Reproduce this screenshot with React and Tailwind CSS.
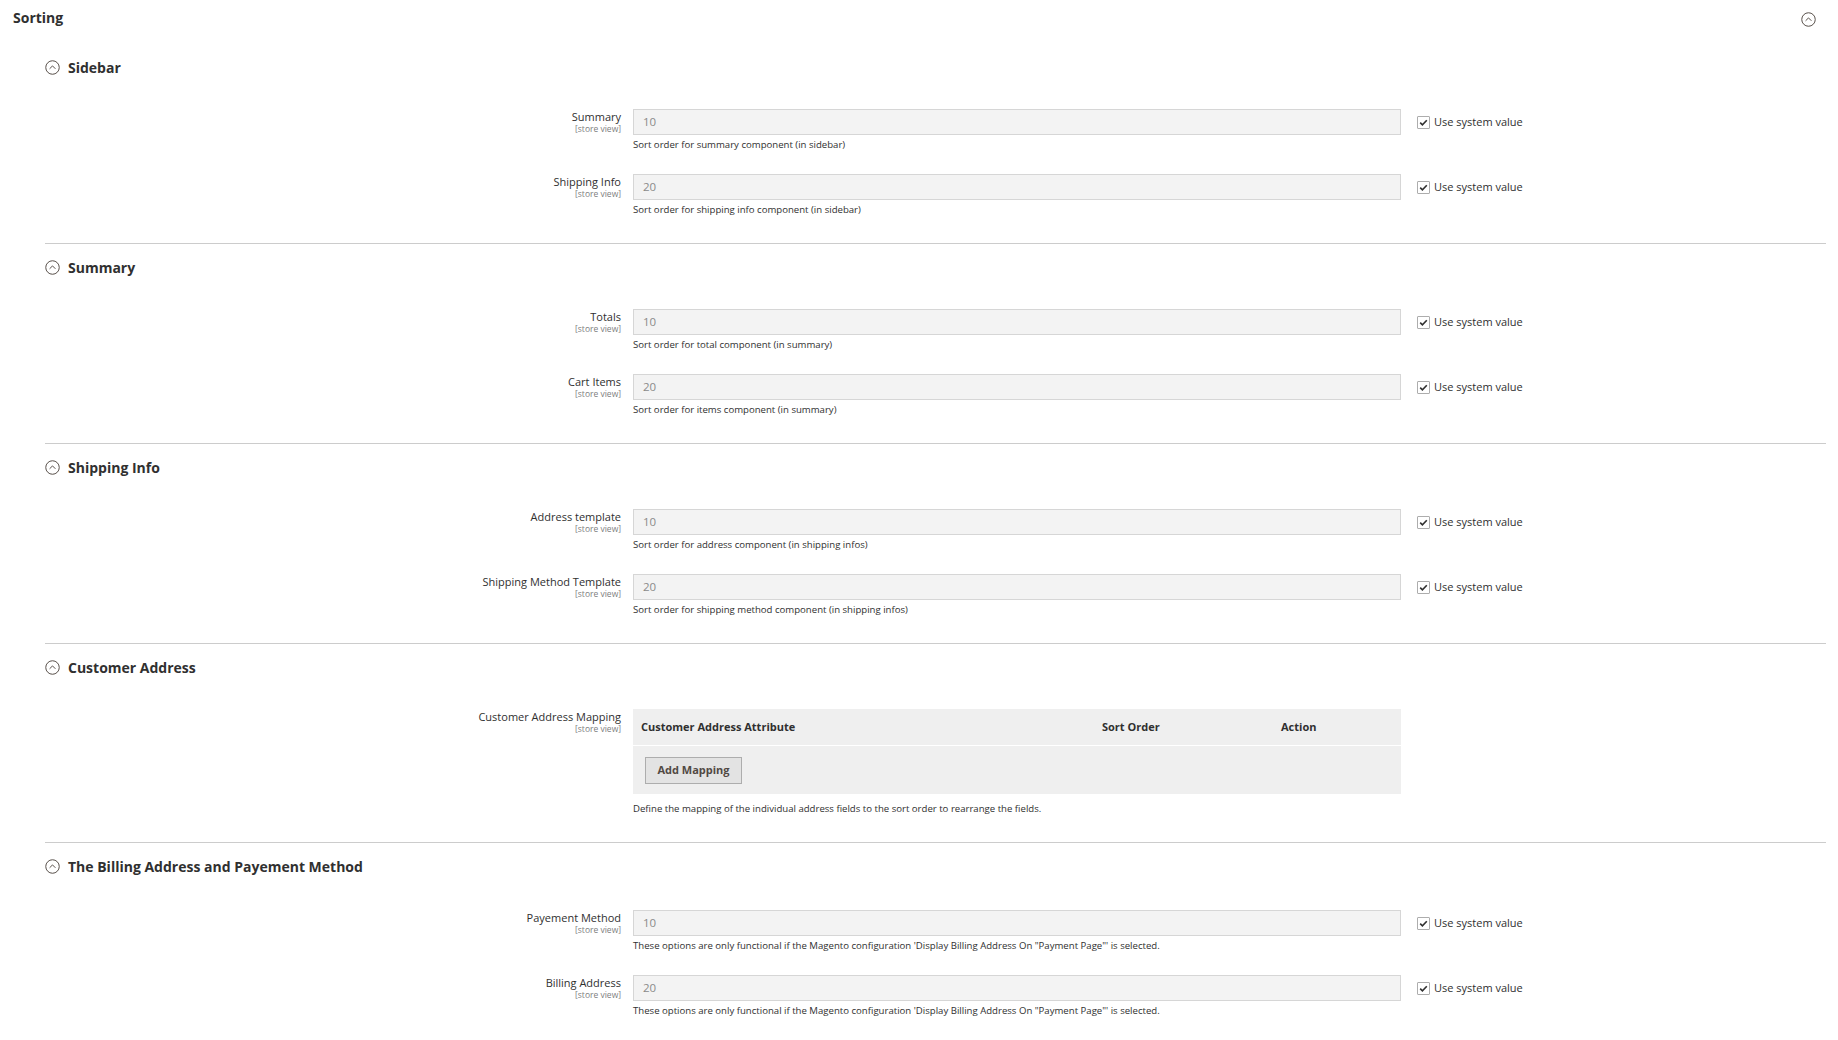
import React from "react";

/* ================= DATA ================= */

const SECTIONS = [
  {
    title: "Sidebar",
    rows: [
      { label: "Summary", value: "10", note: "Sort order for summary component (in sidebar)" },
      { label: "Shipping Info", value: "20", note: "Sort order for shipping info component (in sidebar)" },
    ],
  },
  {
    title: "Summary",
    rows: [
      { label: "Totals", value: "10", note: "Sort order for total component (in summary)" },
      { label: "Cart Items", value: "20", note: "Sort order for items component (in summary)" },
    ],
  },
  {
    title: "Shipping Info",
    rows: [
      { label: "Address template", value: "10", note: "Sort order for address component (in shipping infos)" },
      { label: "Shipping Method Template", value: "20", note: "Sort order for shipping method component (in shipping infos)" },
    ],
  },
];

const BILLING_NOTE =
  'These options are only functional if the Magento configuration \'Display Billing Address On "Payment Page"\' is selected.';

/* ================= ICONS ================= */

function CollapseIcon({ size = 15 }) {
  return (
    <svg width={size} height={size} viewBox="0 0 14 14" fill="none">
      <circle cx="7" cy="7" r="6.3" stroke="#514943" strokeWidth="0.9" />
      <polyline points="4.3,8.2 7,5.5 9.7,8.2" stroke="#514943" strokeWidth="0.9" fill="none" />
    </svg>
  );
}

function Checkbox() {
  return (
    <span className="w-[13px] h-[13px] border border-[#adadad] bg-white flex items-center justify-center rounded-[1px]">
      <svg width="9" height="9" viewBox="0 0 9 9" fill="none">
        <polyline points="1.2,4.6 3.4,6.8 7.8,2.2" stroke="#303030" strokeWidth="1.6" fill="none" />
      </svg>
    </span>
  );
}

/* ================= PIECES ================= */

function Label({ text }) {
  return (
    <div className="w-[588px] pr-[12px] text-right pt-[1px]">
      <div className="text-[11px] leading-[14px] text-[#303030]">{text}</div>
      <div className="text-[8.5px] leading-[10px] text-[#808080]">[store view]</div>
    </div>
  );
}

function FieldRow({ label, value, note }) {
  return (
    <div className="flex">
      <Label text={label} />
      <div className="w-[768px]">
        <div className="h-[26px] border border-[#d6d6d6] bg-[#f3f3f3] flex items-center px-[9px] text-[11.5px] text-[#8a8a8a]">
          {value}
        </div>
        <div className="mt-[3px] text-[9.6px] leading-[14px] text-[#303030]">{note}</div>
      </div>
      <div className="ml-[16px] h-[26px] flex items-center gap-[4px]">
        <Checkbox />
        <span className="text-[11px] text-[#303030]">Use system value</span>
      </div>
    </div>
  );
}

function Heading({ title }) {
  return (
    <div className="h-[20px] flex items-center gap-[8px]">
      <CollapseIcon />
      <span className="text-[14px] font-bold text-[#303030]">{title}</span>
    </div>
  );
}

function Section({ title, children, last, pb = "pb-[26px]", mt = "mt-[32px]" }) {
  return (
    <section className={`pt-[13px] ${pb} ${last ? "" : "border-b border-[#cccccc]"}`}>
      <Heading title={title} />
      <div className={`${mt} flex flex-col gap-[22px]`}>{children}</div>
    </section>
  );
}

/* ================= PAGE ================= */

export default function App() {
  return (
    <main
      className="min-h-screen bg-white text-[#303030]"
      style={{ fontFamily: '"Open Sans", "Liberation Sans", sans-serif' }}
    >
      {/* ===== TITLE ===== */}
      <div className="h-[44px] flex items-start justify-between pl-[13px] pr-[22px] pt-[8px]">
        <h1 className="text-[14px] leading-[20px] font-bold text-[#303030]">Sorting</h1>
        <div className="pt-[4px]">
          <CollapseIcon size={15} />
        </div>
      </div>

      <div className="ml-[45px] mr-[12px]">
        {SECTIONS.map((s) => (
          <Section key={s.title} title={s.title}>
            {s.rows.map((r) => (
              <FieldRow key={r.label} {...r} />
            ))}
          </Section>
        ))}

        {/* ===== CUSTOMER ADDRESS ===== */}
        <Section title="Customer Address" pb="pb-[26px]">
          <div className="flex">
            <Label text="Customer Address Mapping" />
            <div className="w-[768px]">
              <div className="bg-[#efefef]">
                <div className="h-[37px] grid grid-cols-[461px_179px_1fr] items-center px-[8px] text-[11px] font-bold text-[#303030] border-b border-white">
                  <span>Customer Address Attribute</span>
                  <span>Sort Order</span>
                  <span>Action</span>
                </div>
                <div className="h-[48px] flex items-center px-[12px]">
                  <button className="h-[27px] w-[97px] border border-[#adadad] bg-[#e3e3e3] text-[11px] font-bold text-[#514943]">
                    Add Mapping
                  </button>
                </div>
              </div>
              <div className="mt-[8px] text-[9.6px] leading-[14px] text-[#303030]">
                Define the mapping of the individual address fields to the sort order to rearrange the fields.
              </div>
            </div>
          </div>
        </Section>

        {/* ===== BILLING ===== */}
        <Section title="The Billing Address and Payement Method" last mt="mt-[34px]">
          <FieldRow label="Payement Method" value="10" note={BILLING_NOTE} />
          <FieldRow label="Billing Address" value="20" note={BILLING_NOTE} />
        </Section>
      </div>
    </main>
  );
}
